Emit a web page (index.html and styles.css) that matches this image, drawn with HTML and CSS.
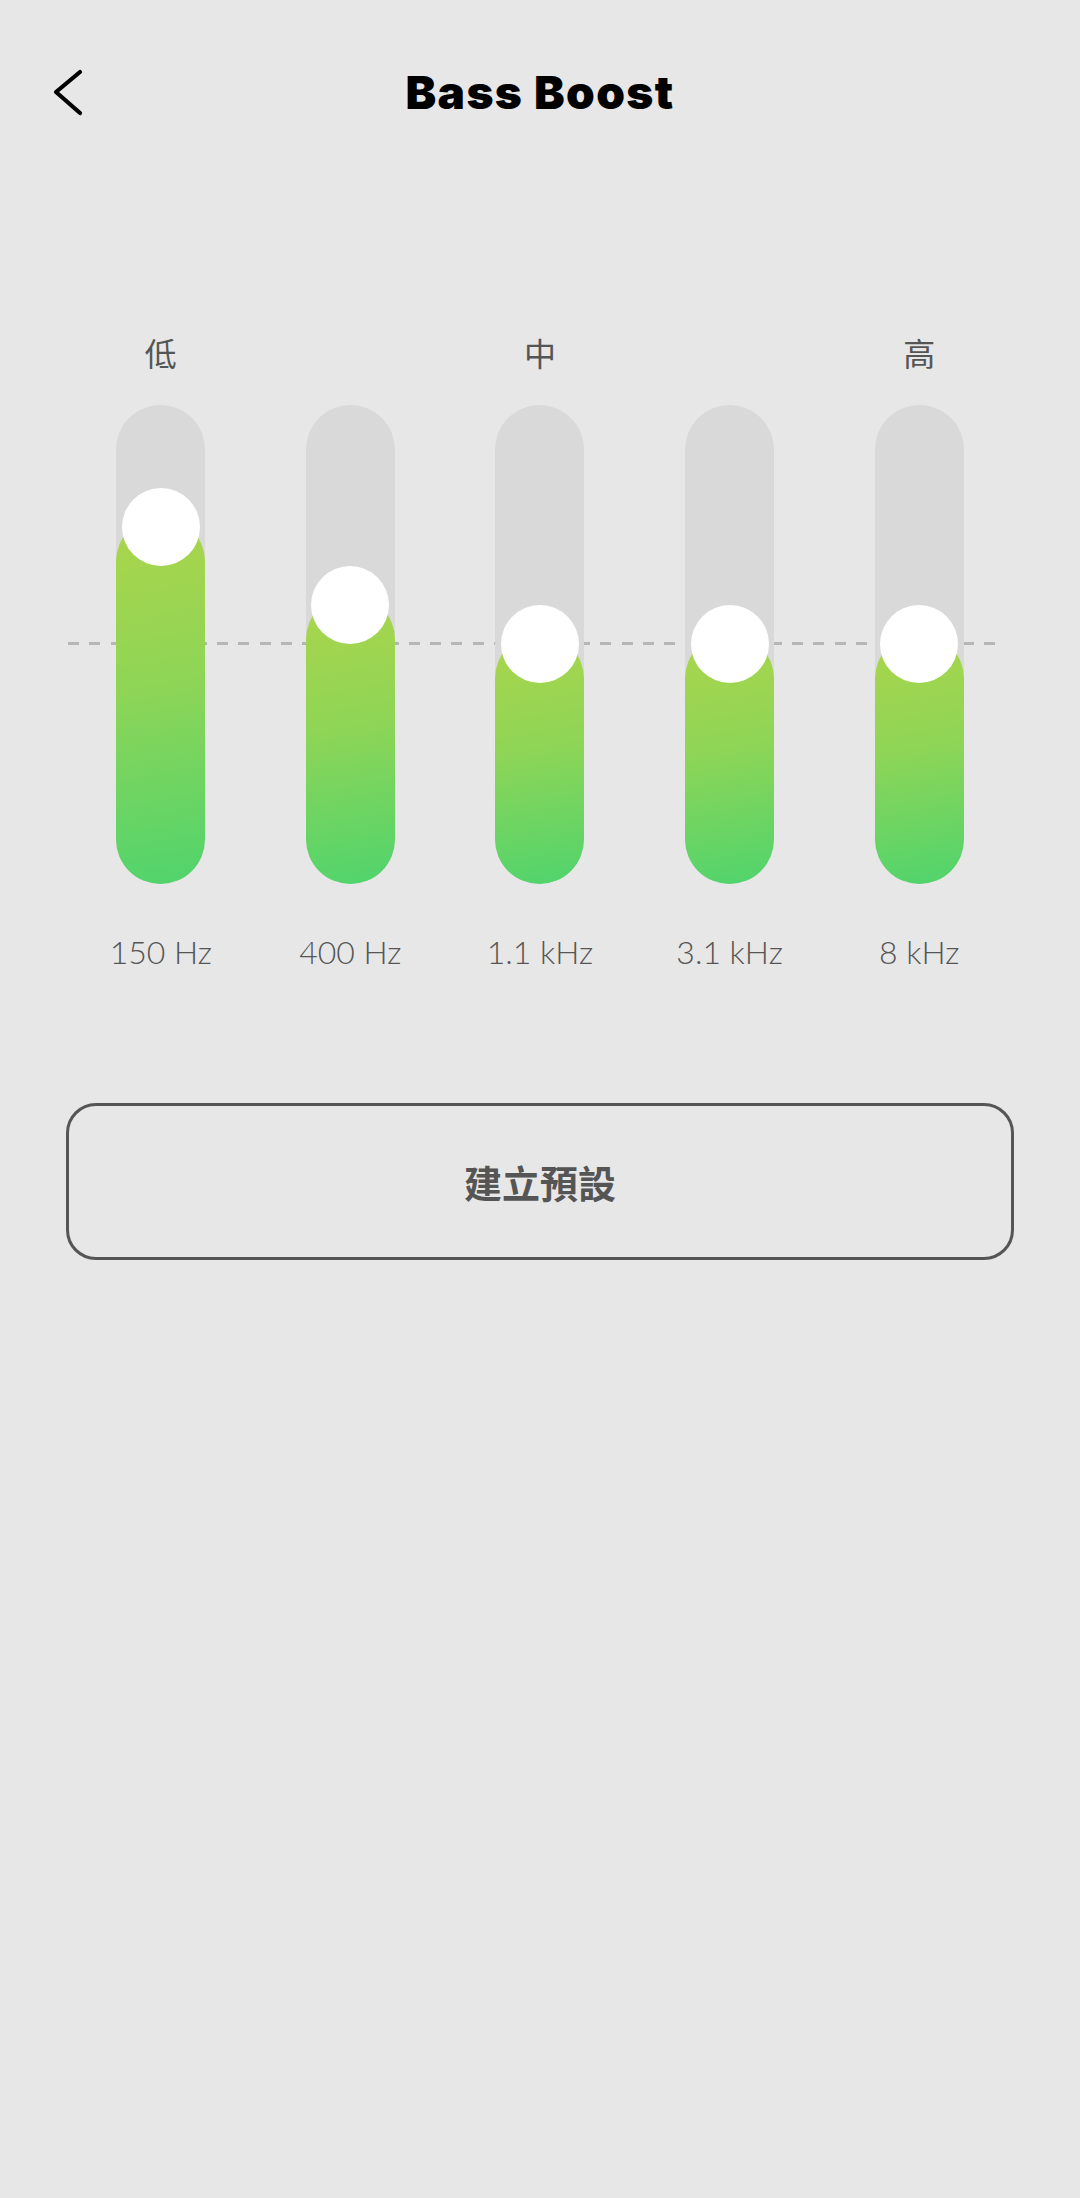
FILE: index.html
```html
<!DOCTYPE html>
<html lang="zh-Hant">
<head>
<meta charset="utf-8">
<title>Bass Boost</title>
<link rel="stylesheet" href="styles.css">
</head>
<body>
<div class="screen">
  <header class="topbar">
    <button class="back" aria-label="返回">
      <svg width="32" height="48" viewBox="0 0 32 48"><path d="M28 4 L4 24 L28 45" fill="none" stroke="#000" stroke-width="4.2" stroke-linecap="round" stroke-linejoin="round"/></svg>
    </button>
    <h1 class="title">Bass Boost</h1>
    <span class="spacer"></span>
  </header>

  <section class="eq">
    <div class="eq-row band-row">
      <span class="band">低</span>
      <span class="band"></span>
      <span class="band">中</span>
      <span class="band"></span>
      <span class="band">高</span>
    </div>

    <div class="eq-row track-row">
      <div class="zero-line"></div>
      <div class="slot"><div class="track"><div class="fill" style="height:367px"></div><div class="knob" style="top:83px"></div></div></div>
      <div class="slot"><div class="track"><div class="fill" style="height:289px"></div><div class="knob" style="top:161px"></div></div></div>
      <div class="slot"><div class="track"><div class="fill" style="height:250px"></div><div class="knob" style="top:200px"></div></div></div>
      <div class="slot"><div class="track"><div class="fill" style="height:250px"></div><div class="knob" style="top:200px"></div></div></div>
      <div class="slot"><div class="track"><div class="fill" style="height:250px"></div><div class="knob" style="top:200px"></div></div></div>
    </div>

    <div class="eq-row freq-row">
      <span class="freq">150 Hz</span>
      <span class="freq">400 Hz</span>
      <span class="freq">1.1 kHz</span>
      <span class="freq">3.1 kHz</span>
      <span class="freq">8 kHz</span>
    </div>
  </section>

  <button class="preset">建立預設</button>
</div>
</body>
</html>
```

FILE: styles.css
```css
* { box-sizing: border-box; }

html, body {
  margin: 0;
  padding: 0;
  background: #e7e7e7;
}

body {
  width: 1080px;
  min-height: 2198px;
  font-family: "Lato", "Noto Sans CJK TC", sans-serif;
  color: #555;
}

.screen {
  display: flex;
  flex-direction: column;
  padding: 0 66px;
}

.topbar {
  display: grid;
  grid-template-columns: 1fr auto 1fr;
  align-items: center;
  height: 184px;
  margin: 0 -66px;
}

.back {
  justify-self: start;
  display: flex;
  margin: 0 0 0 52px;
  padding: 0;
  border: 0;
  background: none;
  width: 32px;
  height: 48px;
}

.title {
  margin: 0;
  font-family: "Inter", "Noto Sans", sans-serif;
  font-weight: 900;
  font-size: 46px;
  letter-spacing: 1.4px;
  color: #000;
}

.eq {
  display: flex;
  flex-direction: column;
  margin-top: 148px;
}

.eq-row {
  display: grid;
  grid-template-columns: repeat(5, 1fr);
  justify-items: center;
}

.band {
  height: 40px;
  line-height: 40px;
  font-family: "Noto Sans CJK TC", sans-serif;
  font-size: 32px;
  color: #555;
}

.track-row {
  position: relative;
  margin-top: 33px;
}

.zero-line {
  position: absolute;
  left: 2px;
  right: 13px;
  top: 237px;
  height: 3px;
  background: repeating-linear-gradient(to right, #b6b6b6 0 11px, transparent 11px 21.3px);
}

.slot {
  display: flex;
  justify-content: center;
  width: 100%;
}

.track {
  position: relative;
  display: flex;
  flex-direction: column;
  justify-content: flex-end;
  width: 89px;
  height: 479px;
  border-radius: 44.5px;
  background: #d9d9d9;
}

.fill {
  width: 100%;
  border-radius: 44.5px;
  background: linear-gradient(170deg, #acd54b 0%, #8fd556 45%, #4fd46d 100%);
}

.knob {
  position: absolute;
  left: 50%;
  width: 78px;
  height: 78px;
  margin-left: -39px;
  border-radius: 50%;
  background: #fff;
}

.freq-row {
  margin-top: 48px;
}

.freq {
  height: 40px;
  line-height: 40px;
  font-family: "Lato", sans-serif;
  font-weight: 300;
  font-size: 32px;
  color: #555;
}

.preset {
  margin-top: 131px;
  height: 157px;
  width: 100%;
  border: 3px solid #555;
  border-radius: 30px;
  background: transparent;
  font-family: "Noto Sans CJK TC", sans-serif;
  font-weight: 700;
  font-size: 38px;
  color: #555;
}
```
